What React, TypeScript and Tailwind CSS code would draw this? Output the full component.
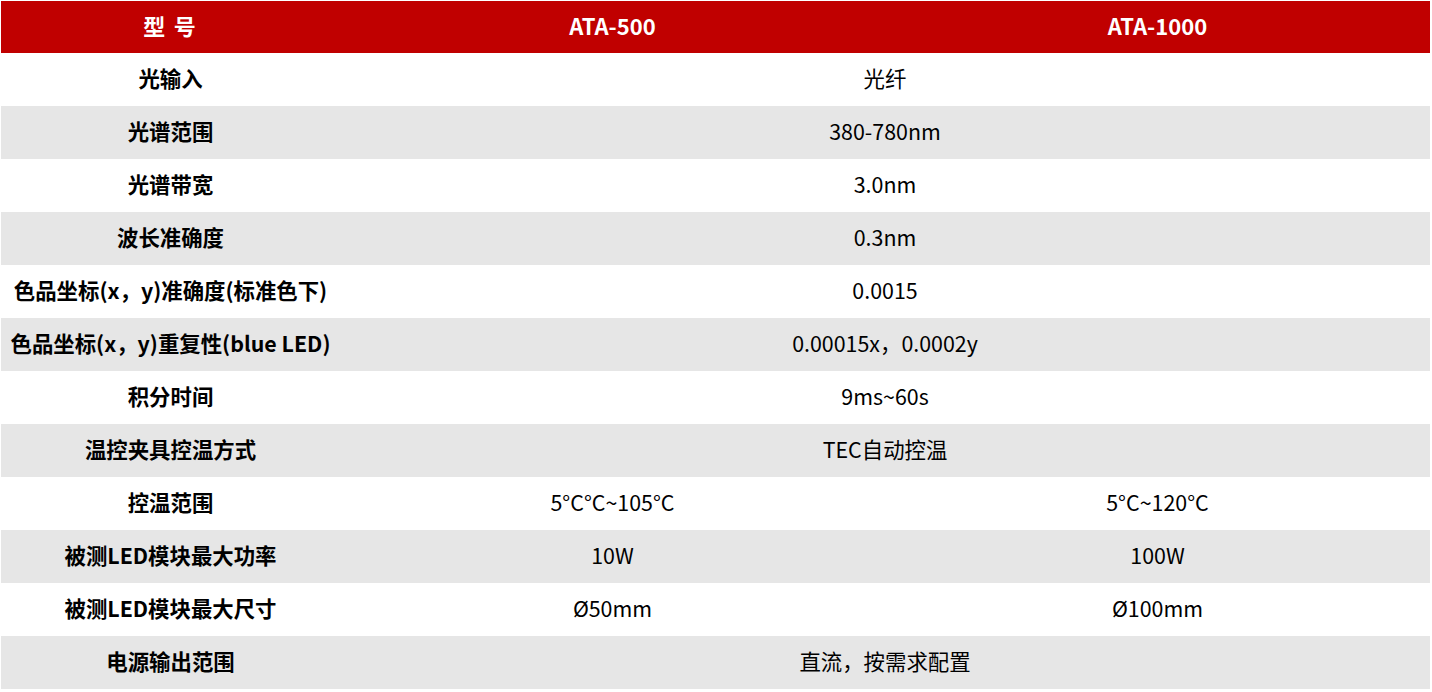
import React from 'react';

type Row = {
  label: string;
  a: string;
  b?: string;
};

const rows: Row[] = [
  { label: '光输入', a: '光纤' },
  { label: '光谱范围', a: '380-780nm' },
  { label: '光谱带宽', a: '3.0nm' },
  { label: '波长准确度', a: '0.3nm' },
  { label: '色品坐标(x，y)准确度(标准色下)', a: '0.0015' },
  { label: '色品坐标(x，y)重复性(blue LED)', a: '0.00015x，0.0002y' },
  { label: '积分时间', a: '9ms~60s' },
  { label: '温控夹具控温方式', a: 'TEC自动控温' },
  { label: '控温范围', a: '5°C°C~105°C', b: '5°C~120°C' },
  { label: '被测LED模块最大功率', a: '10W', b: '100W' },
  { label: '被测LED模块最大尺寸', a: 'Ø50mm', b: 'Ø100mm' },
  { label: '电源输出范围', a: '直流，按需求配置' },
];

export default function App() {
  return (
    <div
      className="w-[1432px] h-[692px] bg-white pl-[1px] text-[21.4px] text-black"
      style={{ fontFamily: '"Noto Sans CJK SC", "Noto Sans", sans-serif' }}
    >
      <div className="w-[1429px]">
        {/* 表头 */}
        <div className="grid grid-cols-[339px_545px_545px] h-[52px] mt-[1px] pb-[3px] bg-[#c00000] text-white font-bold text-[22px]">
          <div className="flex items-center justify-center tracking-[0.08em]">型 号</div>
          <div className="flex items-center justify-center">ATA-500</div>
          <div className="flex items-center justify-center">ATA-1000</div>
        </div>

        {rows.map((row, i) => (
          <div
            key={i}
            className={`grid grid-cols-[339px_545px_545px] h-[53px] pb-[2px] ${i % 2 === 1 ? 'bg-[#e6e6e6]' : 'bg-white'}`}
          >
            <div className="flex items-center justify-center font-bold whitespace-nowrap">{row.label}</div>
            {row.b ? (
              <>
                <div className="flex items-center justify-center">{row.a}</div>
                <div className="flex items-center justify-center">{row.b}</div>
              </>
            ) : (
              <div className="col-span-2 flex items-center justify-center">{row.a}</div>
            )}
          </div>
        ))}
      </div>
    </div>
  );
}
